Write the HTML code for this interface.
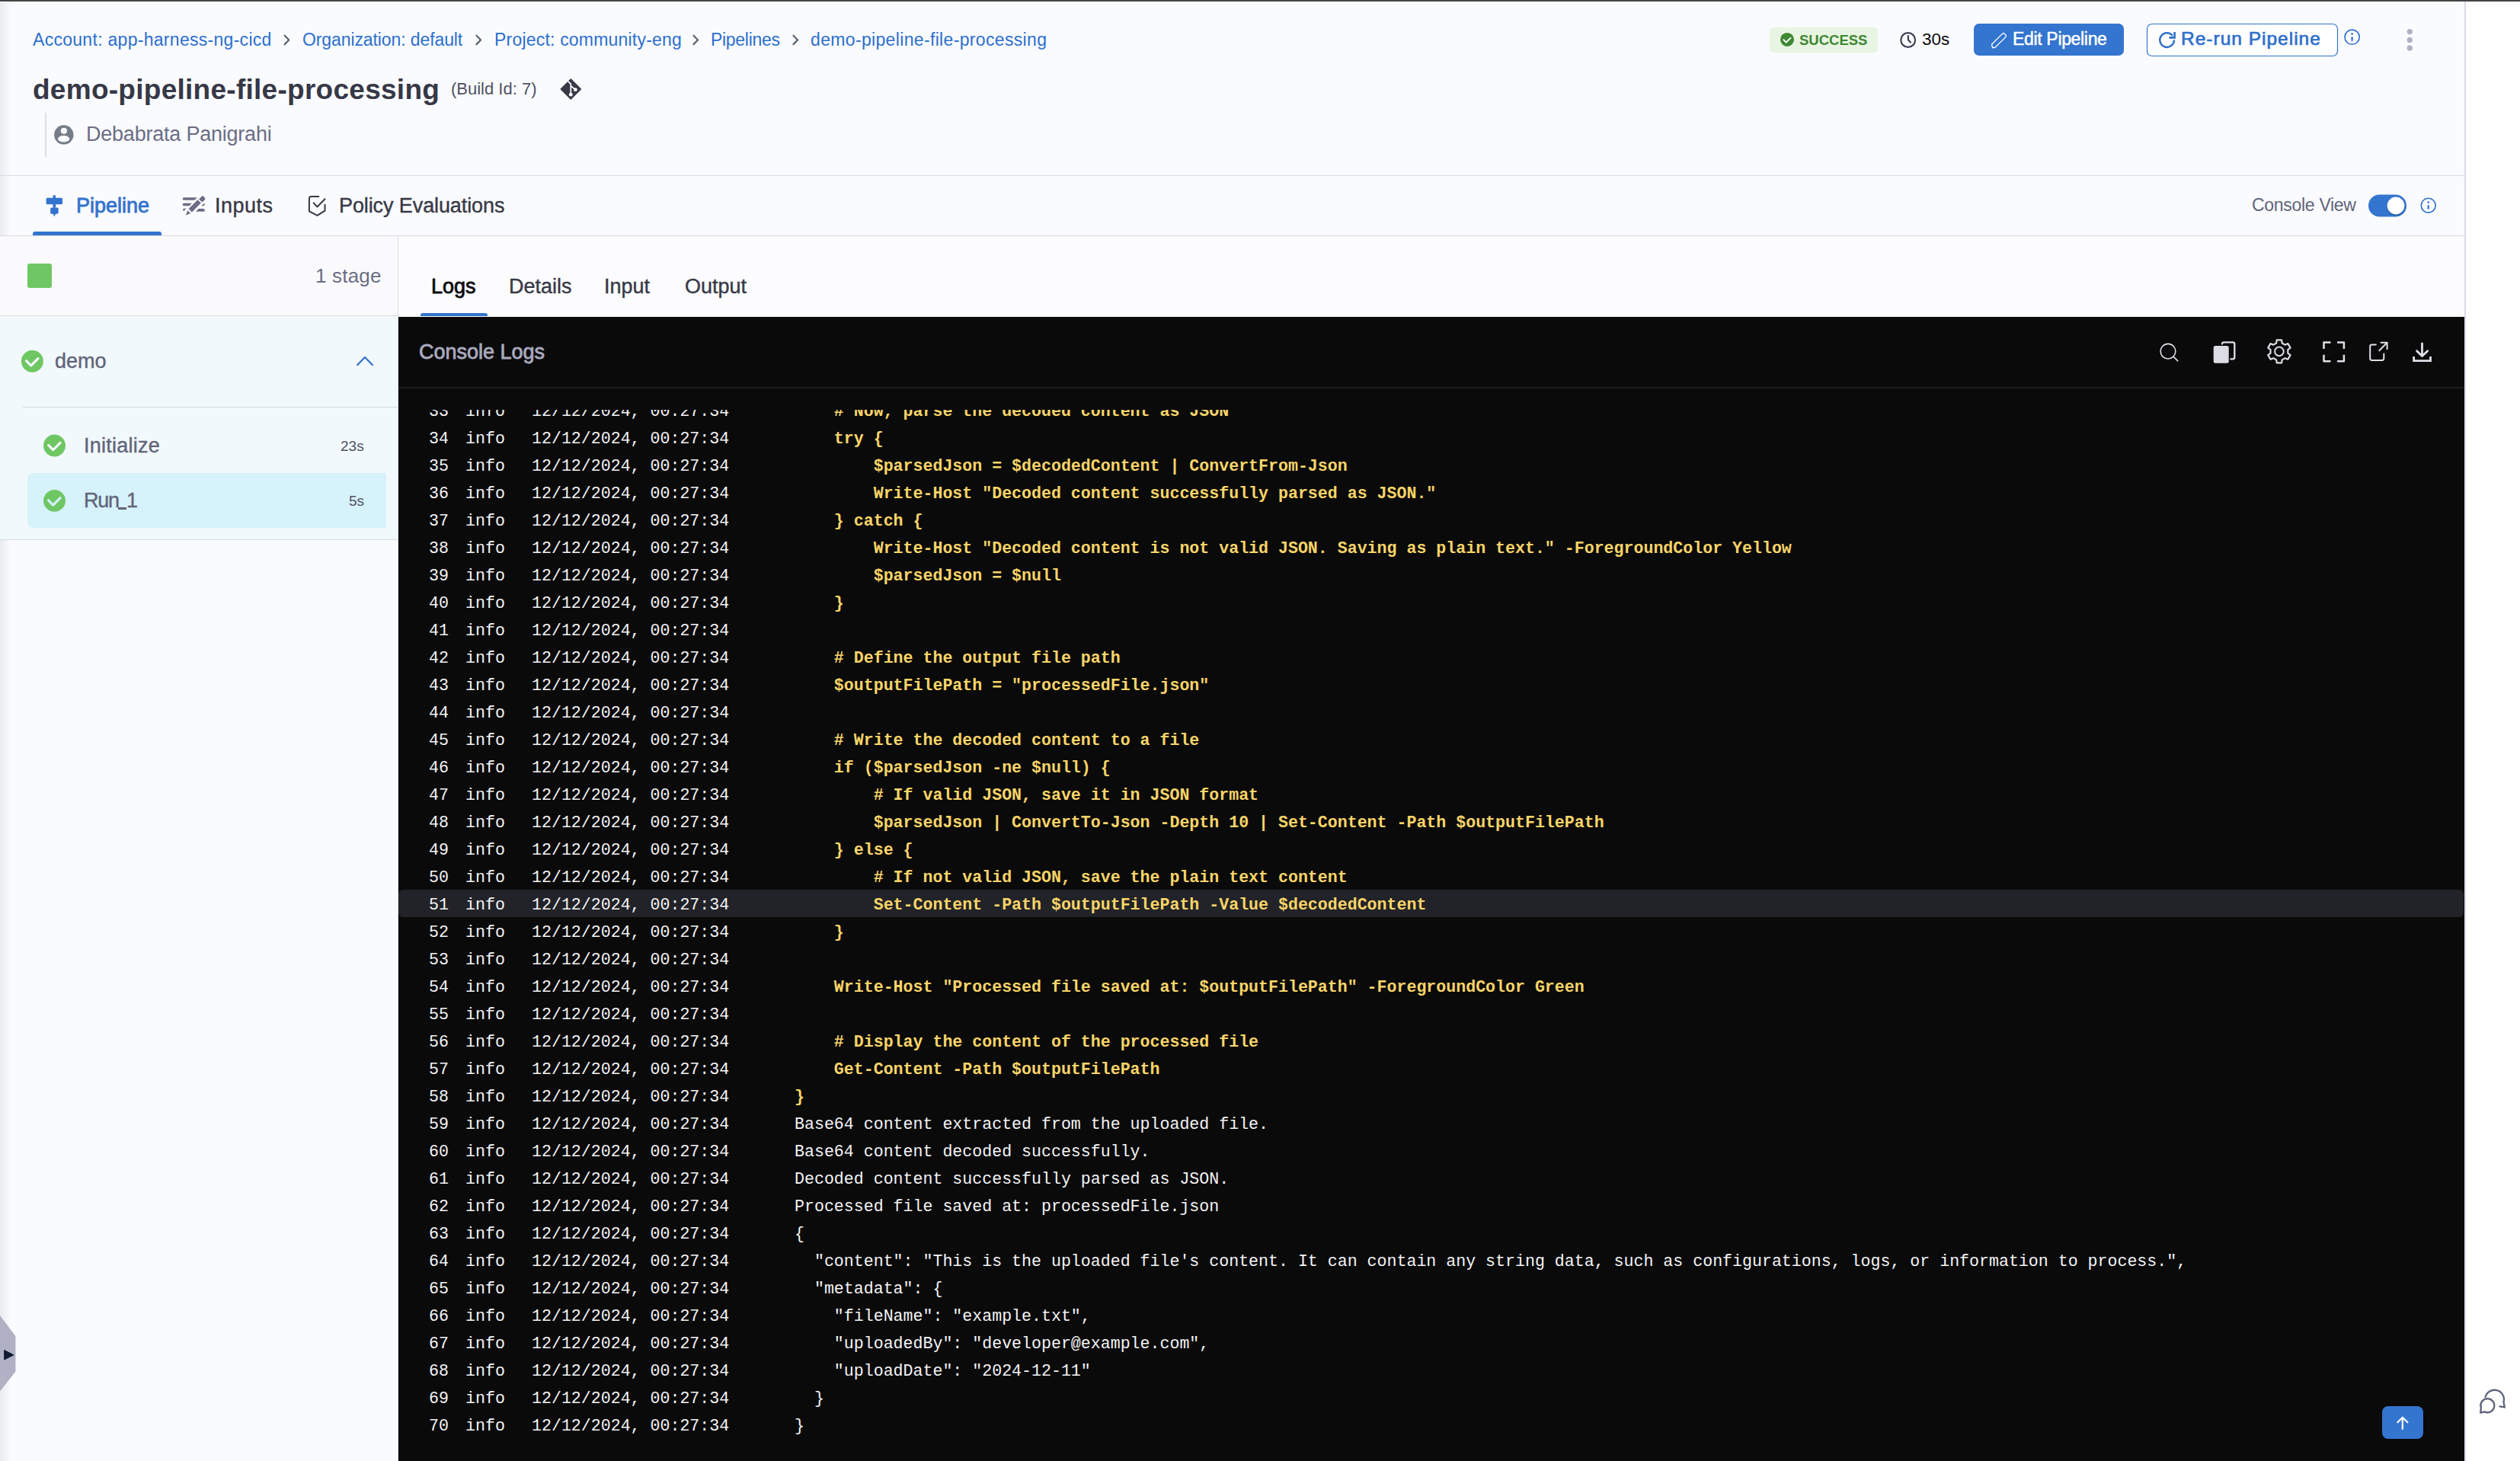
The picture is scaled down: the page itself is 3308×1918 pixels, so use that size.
<!DOCTYPE html>
<html><head><meta charset="utf-8">
<style>
*{box-sizing:border-box;margin:0;padding:0}
html,body{width:3308px;height:1918px;overflow:hidden}
body{background:#FAFBFE;font-family:"Liberation Sans",sans-serif;position:relative}
.a{position:absolute;white-space:nowrap;line-height:1}
svg{position:absolute;overflow:visible}
.bc{font-size:23px;color:#2C6FCF;top:41px;letter-spacing:0.2px}
.log{font-family:"Liberation Mono",monospace;font-size:21.6px}
.row{position:absolute;left:0;width:2711px;height:36px;line-height:36px;white-space:pre;color:#F4F4F6}
.row span{position:absolute;top:2px}
.row.hl{background:#222328;border-radius:6px}
.ln{left:40px}.lv{left:88px}.ts{left:175px}
.wm{left:520px}.ym{left:520px;color:#F9D568;font-weight:bold}
</style></head><body>
<!-- top bar -->
<div class="a" style="left:0;top:0;width:14px;height:1918px;background:linear-gradient(to right,rgba(20,40,60,0.075),rgba(20,40,60,0))"></div>
<div class="a" style="left:0;top:0;width:3308px;height:2px;background:#444645"></div><div class="a" style="left:0;top:2px;width:3308px;height:1px;background:#fff"></div>
<!-- right white strip -->
<div class="a" style="left:3235px;top:2px;width:73px;height:1916px;background:#fff;border-left:2px solid #D9DAE6"></div>

<!-- breadcrumb -->
<div class="a bc" id="bc1" style="left:43px;letter-spacing:0.29px">Account: app-harness-ng-cicd</div>
<div class="a bc" id="bc2" style="left:397px;letter-spacing:-0.1px">Organization: default</div>
<div class="a bc" id="bc3" style="left:649px">Project: community-eng</div>
<div class="a bc" id="bc4" style="left:933px;letter-spacing:-0.3px">Pipelines</div>
<div class="a bc" id="bc5" style="left:1064px;letter-spacing:0.34px">demo-pipeline-file-processing</div>

<!-- title -->
<div class="a" id="title" style="left:43px;top:99px;font-size:37px;font-weight:bold;color:#363846;letter-spacing:0.27px">demo-pipeline-file-processing</div>
<div class="a" id="build" style="left:592px;top:106px;font-size:22px;color:#4F5162">(Build Id: 7)</div>

<!-- author -->
<div class="a" style="left:59px;top:148px;width:1.5px;height:58px;background:#DDDEE8"></div>
<div class="a" id="author" style="left:113px;top:163px;font-size:27px;color:#6B6D85;letter-spacing:-0.22px">Debabrata Panigrahi</div>

<!-- header lines -->
<div class="a" style="left:0;top:230px;width:3235px;height:1px;background:#D9D9E3"></div>
<div class="a" style="left:0;top:309px;width:3235px;height:1px;background:#D9D9E3"></div>

<!-- tabs -->
<div class="a" id="tpipe" style="left:100px;top:257px;font-size:27px;color:#3273CE;-webkit-text-stroke:0.8px #3273CE">Pipeline</div>
<div class="a" style="left:43px;top:304px;width:169px;height:5px;background:#3273CE;border-radius:3px 3px 0 0"></div>
<div class="a" id="tinputs" style="left:282px;top:257px;font-size:27px;color:#383946;letter-spacing:0.5px;-webkit-text-stroke:0.4px #383946">Inputs</div>
<div class="a" id="tpolicy" style="left:445px;top:257px;font-size:27px;color:#383946;letter-spacing:-0.1px;-webkit-text-stroke:0.4px #383946">Policy Evaluations</div>
<div class="a" id="cview" style="left:2956px;top:258px;font-size:23px;color:#5F637A;letter-spacing:-0.3px">Console View</div>

<!-- left panel -->
<div class="a" style="left:0;top:310px;width:522px;height:104px;background:#FAFAFC"></div>
<div class="a" style="left:522px;top:310px;width:1px;height:1608px;background:#DFDFE8"></div>
<div class="a" style="left:36px;top:346px;width:32px;height:32px;background:#6FC764;border-radius:3px"></div>
<div class="a" id="stage1" style="left:414px;top:349px;font-size:26px;color:#6B6D85;letter-spacing:0.2px">1 stage</div>
<div class="a" style="left:0;top:414px;width:522px;height:294px;background:#F2F9FC;border-top:1px solid #D9D9E3"></div>
<div class="a" id="demo" style="left:72px;top:461px;font-size:27px;color:#616479;-webkit-text-stroke:0.4px #616479">demo</div>
<div class="a" style="left:30px;top:534px;width:492px;height:1px;background:#D3DADE"></div>
<div class="a" id="init" style="left:110px;top:572px;font-size:27px;color:#616479;letter-spacing:0.25px;-webkit-text-stroke:0.4px #616479">Initialize</div>
<div class="a" id="t23" style="left:447px;top:576px;font-size:19px;color:#4F5162">23s</div>
<div class="a" style="left:36px;top:621px;width:471px;height:72px;background:#D6F2FB;border-radius:8px 0 0 8px"></div>
<div class="a" id="run1" style="left:110px;top:644px;font-size:27px;color:#616479;letter-spacing:-1.2px;-webkit-text-stroke:0.4px #616479">Run</div><div class="a" style="left:155px;top:666px;width:11px;height:2.6px;background:#616479"></div><div class="a" id="run1b" style="left:166px;top:644px;font-size:27px;color:#616479;-webkit-text-stroke:0.4px #616479">1</div>
<div class="a" id="t5s" style="left:458px;top:648px;font-size:19px;color:#4F5162">5s</div>
<div class="a" style="left:0;top:708px;width:522px;height:1px;background:#D9D9E3"></div>

<!-- right panel tabs -->
<div class="a" style="left:524px;top:310px;width:2711px;height:106px;background:#FCFCFE"></div>
<div class="a" id="tlogs" style="left:566px;top:363px;font-size:27px;color:#0B0B0D;-webkit-text-stroke:0.8px #0B0B0D">Logs</div>
<div class="a" style="left:552px;top:411px;width:88px;height:4px;background:#3273CE;border-radius:3px 3px 0 0"></div>
<div class="a" id="tdetails" style="left:668px;top:363px;font-size:27px;color:#383946;-webkit-text-stroke:0.4px #383946">Details</div>
<div class="a" id="tinput" style="left:793px;top:363px;font-size:27px;color:#383946;-webkit-text-stroke:0.4px #383946">Input</div>
<div class="a" id="toutput" style="left:899px;top:363px;font-size:27px;color:#383946;-webkit-text-stroke:0.4px #383946">Output</div>

<!-- console -->
<div class="a" id="console" style="left:523px;top:416px;width:2712px;height:1502px;background:#0A0A0A;overflow:hidden">
  <div class="a" id="clogs" style="left:27px;top:33px;font-size:27px;color:#A9A9BE;-webkit-text-stroke:0.8px #A9A9BE">Console Logs</div>
  <div class="a" style="left:0;top:92px;width:2712px;height:2px;background:#1C1C21"></div>
  <div id="rows" class="a log" style="left:0;top:122px;width:2712px;height:1380px;overflow:hidden">
<div class="row" style="top:-18px"><span class="ln">33</span><span class="lv">info</span><span class="ts">12/12/2024, 00:27:34</span><span class="ym">    # Now, parse the decoded content as JSON</span></div>
<div class="row" style="top:18px"><span class="ln">34</span><span class="lv">info</span><span class="ts">12/12/2024, 00:27:34</span><span class="ym">    try {</span></div>
<div class="row" style="top:54px"><span class="ln">35</span><span class="lv">info</span><span class="ts">12/12/2024, 00:27:34</span><span class="ym">        $parsedJson = $decodedContent | ConvertFrom-Json</span></div>
<div class="row" style="top:90px"><span class="ln">36</span><span class="lv">info</span><span class="ts">12/12/2024, 00:27:34</span><span class="ym">        Write-Host "Decoded content successfully parsed as JSON."</span></div>
<div class="row" style="top:126px"><span class="ln">37</span><span class="lv">info</span><span class="ts">12/12/2024, 00:27:34</span><span class="ym">    } catch {</span></div>
<div class="row" style="top:162px"><span class="ln">38</span><span class="lv">info</span><span class="ts">12/12/2024, 00:27:34</span><span class="ym">        Write-Host "Decoded content is not valid JSON. Saving as plain text." -ForegroundColor Yellow</span></div>
<div class="row" style="top:198px"><span class="ln">39</span><span class="lv">info</span><span class="ts">12/12/2024, 00:27:34</span><span class="ym">        $parsedJson = $null</span></div>
<div class="row" style="top:234px"><span class="ln">40</span><span class="lv">info</span><span class="ts">12/12/2024, 00:27:34</span><span class="ym">    }</span></div>
<div class="row" style="top:270px"><span class="ln">41</span><span class="lv">info</span><span class="ts">12/12/2024, 00:27:34</span><span class="ym"></span></div>
<div class="row" style="top:306px"><span class="ln">42</span><span class="lv">info</span><span class="ts">12/12/2024, 00:27:34</span><span class="ym">    # Define the output file path</span></div>
<div class="row" style="top:342px"><span class="ln">43</span><span class="lv">info</span><span class="ts">12/12/2024, 00:27:34</span><span class="ym">    $outputFilePath = "processedFile.json"</span></div>
<div class="row" style="top:378px"><span class="ln">44</span><span class="lv">info</span><span class="ts">12/12/2024, 00:27:34</span><span class="ym"></span></div>
<div class="row" style="top:414px"><span class="ln">45</span><span class="lv">info</span><span class="ts">12/12/2024, 00:27:34</span><span class="ym">    # Write the decoded content to a file</span></div>
<div class="row" style="top:450px"><span class="ln">46</span><span class="lv">info</span><span class="ts">12/12/2024, 00:27:34</span><span class="ym">    if ($parsedJson -ne $null) {</span></div>
<div class="row" style="top:486px"><span class="ln">47</span><span class="lv">info</span><span class="ts">12/12/2024, 00:27:34</span><span class="ym">        # If valid JSON, save it in JSON format</span></div>
<div class="row" style="top:522px"><span class="ln">48</span><span class="lv">info</span><span class="ts">12/12/2024, 00:27:34</span><span class="ym">        $parsedJson | ConvertTo-Json -Depth 10 | Set-Content -Path $outputFilePath</span></div>
<div class="row" style="top:558px"><span class="ln">49</span><span class="lv">info</span><span class="ts">12/12/2024, 00:27:34</span><span class="ym">    } else {</span></div>
<div class="row" style="top:594px"><span class="ln">50</span><span class="lv">info</span><span class="ts">12/12/2024, 00:27:34</span><span class="ym">        # If not valid JSON, save the plain text content</span></div>
<div class="row hl" style="top:630px"><span class="ln">51</span><span class="lv">info</span><span class="ts">12/12/2024, 00:27:34</span><span class="ym">        Set-Content -Path $outputFilePath -Value $decodedContent</span></div>
<div class="row" style="top:666px"><span class="ln">52</span><span class="lv">info</span><span class="ts">12/12/2024, 00:27:34</span><span class="ym">    }</span></div>
<div class="row" style="top:702px"><span class="ln">53</span><span class="lv">info</span><span class="ts">12/12/2024, 00:27:34</span><span class="ym"></span></div>
<div class="row" style="top:738px"><span class="ln">54</span><span class="lv">info</span><span class="ts">12/12/2024, 00:27:34</span><span class="ym">    Write-Host "Processed file saved at: $outputFilePath" -ForegroundColor Green</span></div>
<div class="row" style="top:774px"><span class="ln">55</span><span class="lv">info</span><span class="ts">12/12/2024, 00:27:34</span><span class="ym"></span></div>
<div class="row" style="top:810px"><span class="ln">56</span><span class="lv">info</span><span class="ts">12/12/2024, 00:27:34</span><span class="ym">    # Display the content of the processed file</span></div>
<div class="row" style="top:846px"><span class="ln">57</span><span class="lv">info</span><span class="ts">12/12/2024, 00:27:34</span><span class="ym">    Get-Content -Path $outputFilePath</span></div>
<div class="row" style="top:882px"><span class="ln">58</span><span class="lv">info</span><span class="ts">12/12/2024, 00:27:34</span><span class="ym">}</span></div>
<div class="row" style="top:918px"><span class="ln">59</span><span class="lv">info</span><span class="ts">12/12/2024, 00:27:34</span><span class="wm">Base64 content extracted from the uploaded file.</span></div>
<div class="row" style="top:954px"><span class="ln">60</span><span class="lv">info</span><span class="ts">12/12/2024, 00:27:34</span><span class="wm">Base64 content decoded successfully.</span></div>
<div class="row" style="top:990px"><span class="ln">61</span><span class="lv">info</span><span class="ts">12/12/2024, 00:27:34</span><span class="wm">Decoded content successfully parsed as JSON.</span></div>
<div class="row" style="top:1026px"><span class="ln">62</span><span class="lv">info</span><span class="ts">12/12/2024, 00:27:34</span><span class="wm">Processed file saved at: processedFile.json</span></div>
<div class="row" style="top:1062px"><span class="ln">63</span><span class="lv">info</span><span class="ts">12/12/2024, 00:27:34</span><span class="wm">{</span></div>
<div class="row" style="top:1098px"><span class="ln">64</span><span class="lv">info</span><span class="ts">12/12/2024, 00:27:34</span><span class="wm">  "content": "This is the uploaded file's content. It can contain any string data, such as configurations, logs, or information to process.",</span></div>
<div class="row" style="top:1134px"><span class="ln">65</span><span class="lv">info</span><span class="ts">12/12/2024, 00:27:34</span><span class="wm">  "metadata": {</span></div>
<div class="row" style="top:1170px"><span class="ln">66</span><span class="lv">info</span><span class="ts">12/12/2024, 00:27:34</span><span class="wm">    "fileName": "example.txt",</span></div>
<div class="row" style="top:1206px"><span class="ln">67</span><span class="lv">info</span><span class="ts">12/12/2024, 00:27:34</span><span class="wm">    "uploadedBy": "developer@example.com",</span></div>
<div class="row" style="top:1242px"><span class="ln">68</span><span class="lv">info</span><span class="ts">12/12/2024, 00:27:34</span><span class="wm">    "uploadDate": "2024-12-11"</span></div>
<div class="row" style="top:1278px"><span class="ln">69</span><span class="lv">info</span><span class="ts">12/12/2024, 00:27:34</span><span class="wm">  }</span></div>
<div class="row" style="top:1314px"><span class="ln">70</span><span class="lv">info</span><span class="ts">12/12/2024, 00:27:34</span><span class="wm">}</span></div>
</div>
</div>

<svg id="icons" width="3308" height="1918" viewBox="0 0 3308 1918" style="left:0;top:0;position:absolute">
<g fill="none" stroke="#586575" stroke-width="2.3" stroke-linecap="round" stroke-linejoin="round">
<path d="M373.7 46.8L379.3 52.5L373.7 58.1"/>
<path d="M625.5 46.8L631.1 52.5L625.5 58.1"/>
<path d="M910.5 46.8L916.1 52.5L910.5 58.1"/>
<path d="M1041.5 46.8L1047.1 52.5L1041.5 58.1"/>
</g>
<!-- git diamond -->
<path d="M749.3 104 L762.3 117 L749.3 130 L736.3 117 Z" fill="#383A48" stroke="#383A48" stroke-width="1.6" stroke-linejoin="round"/>
<path d="M744.8 105.8 L749.3 110.3 L749.3 124.3 M749.6 112.8 L755.3 117.8" fill="none" stroke="#FAFBFE" stroke-width="1.7"/>
<circle cx="749.3" cy="124.2" r="2.4" fill="#FAFBFE"/><circle cx="755.4" cy="117.7" r="2.4" fill="#FAFBFE"/>
<!-- person -->
<circle cx="83.8" cy="176.9" r="12.7" fill="#767D8A"/>
<circle cx="83.9" cy="171.8" r="4.1" fill="#FAFBFE"/>
<ellipse cx="83.6" cy="182.2" rx="7.6" ry="4.3" fill="#FAFBFE"/>
<!-- success badge -->
<rect x="2323" y="36" width="142" height="33" rx="6" fill="#E8F5E2"/>
<circle cx="2346" cy="51.9" r="9" fill="#3E8733"/>
<path d="M2340.8 51.6L2344.6 55.6L2351 49.4" fill="none" stroke="#fff" stroke-width="2"/>
<!-- clock -->
<circle cx="2504.7" cy="52.5" r="9.4" fill="none" stroke="#3F4152" stroke-width="2.2"/>
<path d="M2504.9 47L2504.9 52.3L2507.9 55.6" fill="none" stroke="#3F4152" stroke-width="2.2" stroke-linecap="round"/>
<!-- edit button -->
<rect x="2591" y="31" width="197" height="42" rx="7" fill="#3375CF"/>
<path d="M2615.5 62.5 L2614.5 58.2 L2628.5 44.4 Q2630 43 2631.5 44.4 L2632.8 45.7 Q2634.2 47.2 2632.8 48.6 L2618.8 62.5 Z" fill="none" stroke="#fff" stroke-width="1.3" stroke-linejoin="round"/>
<!-- rerun button -->
<rect x="2818.5" y="31.5" width="250" height="42" rx="6.5" fill="#fff" stroke="#3273CE" stroke-width="1.2"/>
<path d="M2853.9 52.6 A9.3 9.3 0 1 1 2851.9 46.8" fill="none" stroke="#2E6FCC" stroke-width="2.5"/>
<path d="M2847.5 49.4 L2854.6 49.4 L2854.6 42.1" fill="none" stroke="#2E6FCC" stroke-width="2.6"/>
<!-- info -->
<circle cx="3087.6" cy="48.7" r="9.6" fill="none" stroke="#2E6FCC" stroke-width="1.6"/>
<circle cx="3087.6" cy="44.6" r="1.3" fill="#2E6FCC"/>
<rect x="3086.5" y="48.3" width="2.2" height="5.6" rx="1" fill="#2E6FCC"/>
<!-- kebab -->
<circle cx="3163.3" cy="41.6" r="3.6" fill="#B0B1C3"/><circle cx="3163.3" cy="52.4" r="3.6" fill="#B0B1C3"/><circle cx="3163.3" cy="63.2" r="3.6" fill="#B0B1C3"/>
<!-- pipeline tab icon -->
<g fill="#3273CE">
<rect x="69.5" y="256" width="3.6" height="17" rx="1.8"/>
<rect x="60.6" y="259.7" width="21.4" height="8.5" rx="1.5"/>
<rect x="66.2" y="272.5" width="10.4" height="8.2" rx="1.5"/>
<path d="M69.3 280 L73.3 280 L71.3 284.6 Z"/>
</g>
<!-- inputs icon -->
<g fill="#6B6D85">
<path d="M241.5 259.2 H258.8 L255.4 262.7 H241.5 A1.75 1.75 0 0 1 241.5 259.2Z"/>
<path d="M241.5 266.7 H251.8 L248.6 270.3 H241.5 A1.8 1.8 0 0 1 241.5 266.7Z"/>
<path d="M240 275.5 A1.7 1.7 0 0 1 241.7 273.8 H244.5 L241.3 277.2 Z"/>
<path d="M260.6 274 H266.9 A1.9 1.9 0 0 1 266.9 277.8 H257.1 Z"/>
<path d="M264.1 270.3 L268.6 266.7 L268.6 268.5 A1.8 1.8 0 0 1 266.8 270.3 Z"/>
<path d="M247.7 274.1 L259.5 262.2 L263.8 266.4 L251.8 278.8 Z"/>
<path d="M243.6 282.6 L246.5 276.3 L250 280.3 Z"/>
<path d="M261.1 261.5 L264.3 258.3 A2.3 2.3 0 0 1 267.7 258.3 L268.6 259.3 A2.3 2.3 0 0 1 268.6 262.6 L265.5 265.6 Z"/>
</g>
<!-- policy icon -->
<g fill="none" stroke="#383946" stroke-width="2" stroke-linejoin="round">
<path d="M419.1 258 H408.4 Q405.9 258 405.9 260.5 V277.4 L416.5 282.9 L426.5 276.7 V268"/>
<path d="M411.1 265.9 L416.5 271.5 L427 260.8"/>
</g>
<!-- toggle -->
<rect x="3109" y="255.6" width="50" height="29" rx="14.5" fill="#3375CF"/>
<circle cx="3145" cy="270" r="11.4" fill="#fff" style="filter:drop-shadow(0 1px 1px rgba(0,0,0,.35))"/>
<circle cx="3187.7" cy="269.7" r="9.4" fill="none" stroke="#2E6FCC" stroke-width="1.6"/>
<circle cx="3187.7" cy="265.6" r="1.3" fill="#2E6FCC"/>
<rect x="3186.6" y="269.2" width="2.2" height="5.6" rx="1" fill="#2E6FCC"/>
<!-- stage checks -->
<g>
<circle cx="42.4" cy="474.3" r="14.45" fill="#6FC764"/>
<path d="M34.5 473.7 L40.6 480 L50 470.6" fill="none" stroke="#F3F9FC" stroke-width="3.2" stroke-linecap="round" stroke-linejoin="round"/>
<circle cx="71.5" cy="585" r="14.45" fill="#6FC764"/>
<path d="M63.6 584.4 L69.7 590.7 L79.1 581.3" fill="none" stroke="#F3F9FC" stroke-width="3.2" stroke-linecap="round" stroke-linejoin="round"/>
<circle cx="71.5" cy="657.4" r="14.45" fill="#6FC764"/>
<path d="M63.6 656.8 L69.7 663.1 L79.1 653.7" fill="none" stroke="#D5F1FB" stroke-width="3.2" stroke-linecap="round" stroke-linejoin="round"/>
</g>
<path d="M468.5 479.8 L479 469 L489.6 479.8" fill="none" stroke="#3273CE" stroke-width="2.2"/>
<!-- console icons -->
<g fill="none" stroke="#E0E0E8" stroke-linecap="round" stroke-linejoin="round">
<circle cx="2846" cy="461.2" r="9.8" stroke-width="1.6"/>
<path d="M2853.5 468.7 L2858.8 473.8" stroke-width="1.6"/>
<path d="M2917 451.5 Q2917 449.3 2919.3 449.3 H2931 Q2933.3 449.3 2933.3 451.6 V469.1 Q2933.3 471.4 2931 471.4 H2928.3" stroke-width="2.3"/>
<path d="M3050.5 457.9 V449.5 H3059.5 M3068.1 449.5 H3076.9 V458.1 M3050.5 465.7 V474.3 H3059.5 M3068.1 474.3 H3076.9 V465.7" stroke-width="2.5" stroke-linecap="butt"/>
<path d="M3118.8 452.4 H3113.6 Q3111.2 452.4 3111.2 454.8 V470.5 Q3111.2 472.9 3113.6 472.9 H3126.9 Q3129.3 472.9 3129.3 470.5 V464.5" stroke-width="2"/>
<path d="M3123.3 460.2 L3133.1 450.3 M3125.5 449.8 H3133.6 V458.3" stroke-width="2"/>
<path d="M3179.5 451 V467.5 M3172.6 460.7 L3179.5 467.6 L3186.7 460.7" stroke-width="2.8"/>
<path d="M3168.6 468.1 V473.6 H3190.5 V468.1" stroke-width="2.8" stroke-linecap="butt" stroke-linejoin="miter"/>
</g>
<rect x="2905.7" y="454" width="20" height="22.7" rx="2.5" fill="#DCDCE4"/>
<path d="M2988.12 450.43 L2988.70 446.34 L2995.10 446.34 L2995.68 450.43 L2999.51 452.65 L3003.34 451.10 L3006.55 456.64 L3003.29 459.19 L3003.29 463.61 L3006.55 466.16 L3003.34 471.70 L2999.51 470.15 L2995.68 472.37 L2995.10 476.46 L2988.70 476.46 L2988.12 472.37 L2984.29 470.15 L2980.46 471.70 L2977.25 466.16 L2980.51 463.61 L2980.51 459.19 L2977.25 456.64 L2980.46 451.10 L2984.29 452.65Z" fill="none" stroke="#DCDCE4" stroke-width="2.2" stroke-linejoin="round"/>
<circle cx="2991.9" cy="461.4" r="5.8" fill="none" stroke="#DCDCE4" stroke-width="2"/>
<!-- scroll top -->
<rect x="3127" y="1846" width="54" height="43" rx="8" fill="#3375CF"/>
<path d="M3153.8 1876 V1861 M3147.4 1867.3 L3153.8 1860.8 L3160.4 1867.3" fill="none" stroke="#fff" stroke-width="2.2" stroke-linecap="round" stroke-linejoin="round"/>
<!-- chat -->
<g fill="none" stroke="#5F637A" stroke-width="2.3" stroke-linecap="round">
<path d="M3262.5 1834 A12.3 12.3 0 1 1 3286.5 1840.5 L3287.7 1847.4 L3281.5 1846.4"/>
<path d="M3256.84 1848.28 A9 9 0 1 1 3261.5 1853.36 L3256.2 1854.7 Z" stroke-linejoin="round"/>
</g>
<!-- bottom-left tab -->
<path d="M0 1727 L20.4 1754 V1800.5 L0 1826.6 Z" fill="#B0B1C4"/>
<path d="M5.7 1772.5 L17.9 1778.8 L5.7 1785 Z" fill="#0F1A33" stroke="#0F1A33" stroke-width="1" stroke-linejoin="round"/>
</svg>
<div class="a" id="succ" style="left:2362px;top:44px;font-size:18.5px;font-weight:bold;color:#3E8733;z-index:2">SUCCESS</div>
<div class="a" id="t30s" style="left:2523px;top:41px;font-size:22.5px;color:#0B0B0D;z-index:2">30s</div>
<div class="a" id="edit" style="left:2642px;top:40px;font-size:23px;color:#fff;z-index:2;-webkit-text-stroke:0.5px #fff;letter-spacing:-0.33px">Edit Pipeline</div>
<div class="a" id="rerun" style="left:2863px;top:39px;font-size:24.5px;color:#2E6FCC;z-index:2;letter-spacing:1px;-webkit-text-stroke:0.7px #2E6FCC">Re-run Pipeline</div>
</body></html>
